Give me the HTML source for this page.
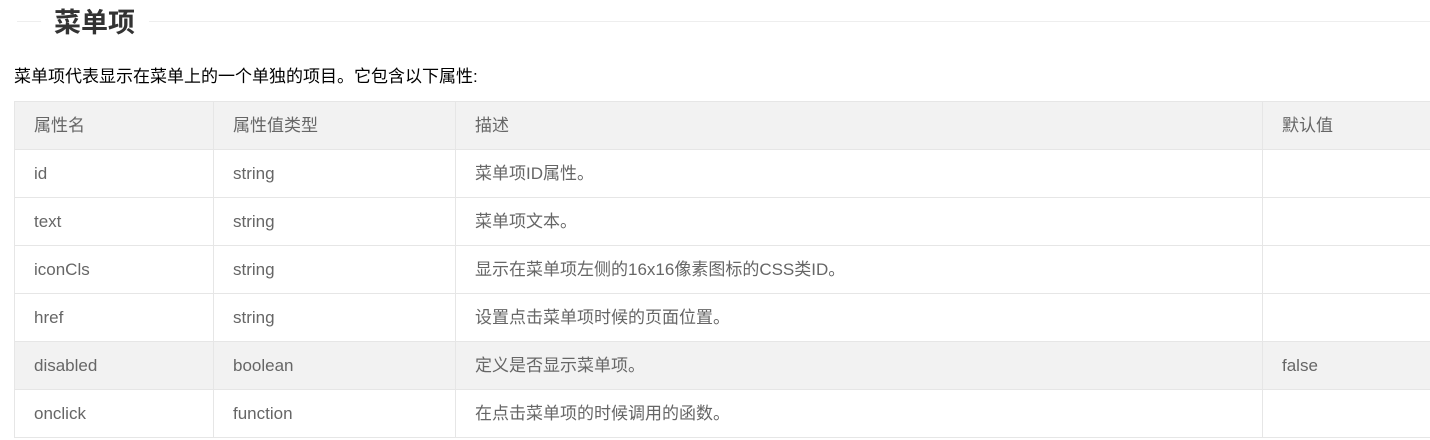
<!DOCTYPE html>
<html><head><meta charset="utf-8"><style>
body{margin:0;width:1430px;height:440px;overflow:hidden;background:#fff;font-family:"Liberation Sans","Noto Sans CJK SC",sans-serif;}
.l1{position:absolute;left:17px;top:21px;width:24px;height:1px;background:#eee}
.l2{position:absolute;left:149px;top:21px;width:1290px;height:1px;background:#eee}
h2{position:absolute;left:54px;top:5px;margin:0;font-size:27px;font-weight:bold;color:#333;line-height:36px}
p{position:absolute;left:14px;top:64px;margin:0;font-size:17px;color:#000;line-height:26px}
table{position:absolute;left:14px;top:101px;border-collapse:collapse;width:1430px;table-layout:fixed;font-size:17px;color:#666}
td{border:1px solid #e6e6e6;height:48px;padding:0 0 0 19px;box-sizing:border-box;line-height:20px;vertical-align:middle}
tr{height:48px}
tr.g td{background:#f2f2f2}
</style></head><body>
<div class="l1"></div><div class="l2"></div>
<h2>菜单项</h2>
<p>菜单项代表显示在菜单上的一个单独的项目。它包含以下属性:</p>
<table>
<colgroup><col style="width:199px"><col style="width:242px"><col style="width:807px"><col></colgroup>
<tr class="g"><td>属性名</td><td>属性值类型</td><td>描述</td><td>默认值</td></tr>
<tr><td>id</td><td>string</td><td>菜单项ID属性。</td><td></td></tr>
<tr><td>text</td><td>string</td><td>菜单项文本。</td><td></td></tr>
<tr><td>iconCls</td><td>string</td><td>显示在菜单项左侧的16x16像素图标的CSS类ID。</td><td></td></tr>
<tr><td>href</td><td>string</td><td>设置点击菜单项时候的页面位置。</td><td></td></tr>
<tr class="g"><td>disabled</td><td>boolean</td><td>定义是否显示菜单项。</td><td>false</td></tr>
<tr><td>onclick</td><td>function</td><td>在点击菜单项的时候调用的函数。</td><td></td></tr>
</table>
</body></html>
